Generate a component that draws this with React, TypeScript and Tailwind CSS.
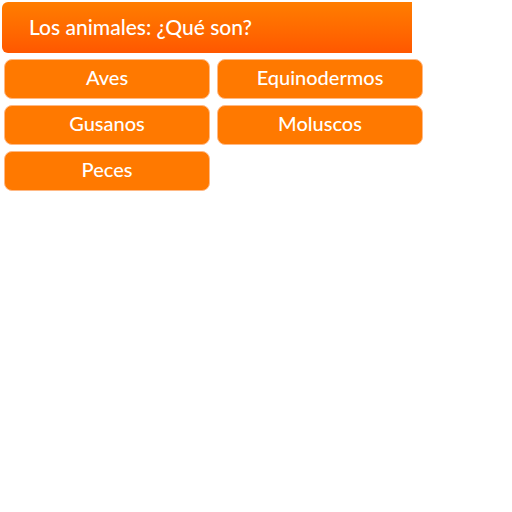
import React from "react";

const left = ["Aves", "Gusanos", "Peces"];
const right = ["Equinodermos", "Moluscos"];

const Option = ({ label }: { label: string }) => (
  <button className="flex h-[40px] w-[206px] items-center justify-center rounded-[8px] border border-[#ffb985] bg-[#ff7900] pb-[4px] text-[20px] font-medium leading-none text-white">
    {label}
  </button>
);

export default function App() {
  return (
    <div className="h-[512px] w-[512px] bg-white font-['Lato',sans-serif]">
      <div className="pl-[2px] pt-[2px]">
        <div className="flex h-[51px] w-[410px] items-center rounded-l-[6px] bg-gradient-to-b from-[#ff7d00] to-[#ff5700] pb-[2px] pl-[27px] text-[21px] font-medium leading-none text-white">
          Los animales: ¿Qué son?
        </div>
      </div>
      <div className="flex gap-[7px] pl-[4px] pt-[6px]">
        <div className="flex flex-col gap-[6px]">
          {left.map((l) => (
            <Option key={l} label={l} />
          ))}
        </div>
        <div className="flex flex-col gap-[6px]">
          {right.map((l) => (
            <Option key={l} label={l} />
          ))}
        </div>
      </div>
    </div>
  );
}
